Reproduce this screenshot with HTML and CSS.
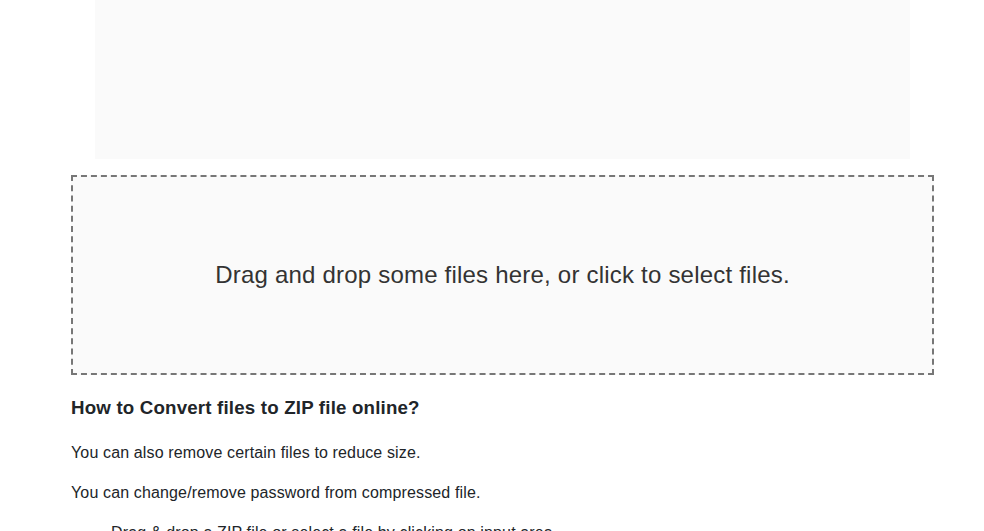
FILE: index.html
```html
<!DOCTYPE html>
<html lang="en">

<head>
    <meta charset="UTF-8">
    <meta name="viewport" content="width=device-width, initial-scale=1.0">
    <title>Convert files to ZIP</title>
    <link rel="stylesheet" href="styles.css">
</head>

<body>
    <div class="container">
        <div class="ad-box"></div>

        <div class="dropzone">
            <p class="dropzone-text">Drag and drop some files here, or click to select files.</p>
        </div>

        <h3>How to Convert files to ZIP file online?</h3>
        <p>You can also remove certain files to reduce size.</p>
        <p>You can change/remove password from compressed file.</p>
        <ul class="steps">
            <li>Drag &amp; drop a ZIP file or select a file by clicking on input area.</li>
        </ul>
    </div>
</body>

</html>
```

FILE: styles.css
```css
body {
    margin: 0;
    padding: 0;
    background-color: #fff;
    font-family: "Liberation Sans", Arial, sans-serif;
    font-size: 16px;
    line-height: 1.5;
    letter-spacing: 0.14px;
    color: #212529;
}

.container {
    width: 863px;
    margin-left: 71px;
}

.ad-box {
    height: 159px;
    margin: 0 24px 16px 24px;
    background-color: #fafafa;
}

.dropzone {
    height: 196px;
    border: 2px dashed #777;
    background-color: #fafafa;
    display: flex;
    align-items: center;
    justify-content: center;
    cursor: pointer;
}

.dropzone-text {
    margin: 0;
    font-size: 24px;
    letter-spacing: 0.21px;
    color: #333;
}

h3 {
    font-size: 18.72px;
    font-weight: bold;
    letter-spacing: 0.18px;
    margin: 18.72px 0;
}

p {
    margin: 16px 0;
}

.steps {
    list-style: none;
    margin: 16px 0;
    padding-left: 40px;
}
```
